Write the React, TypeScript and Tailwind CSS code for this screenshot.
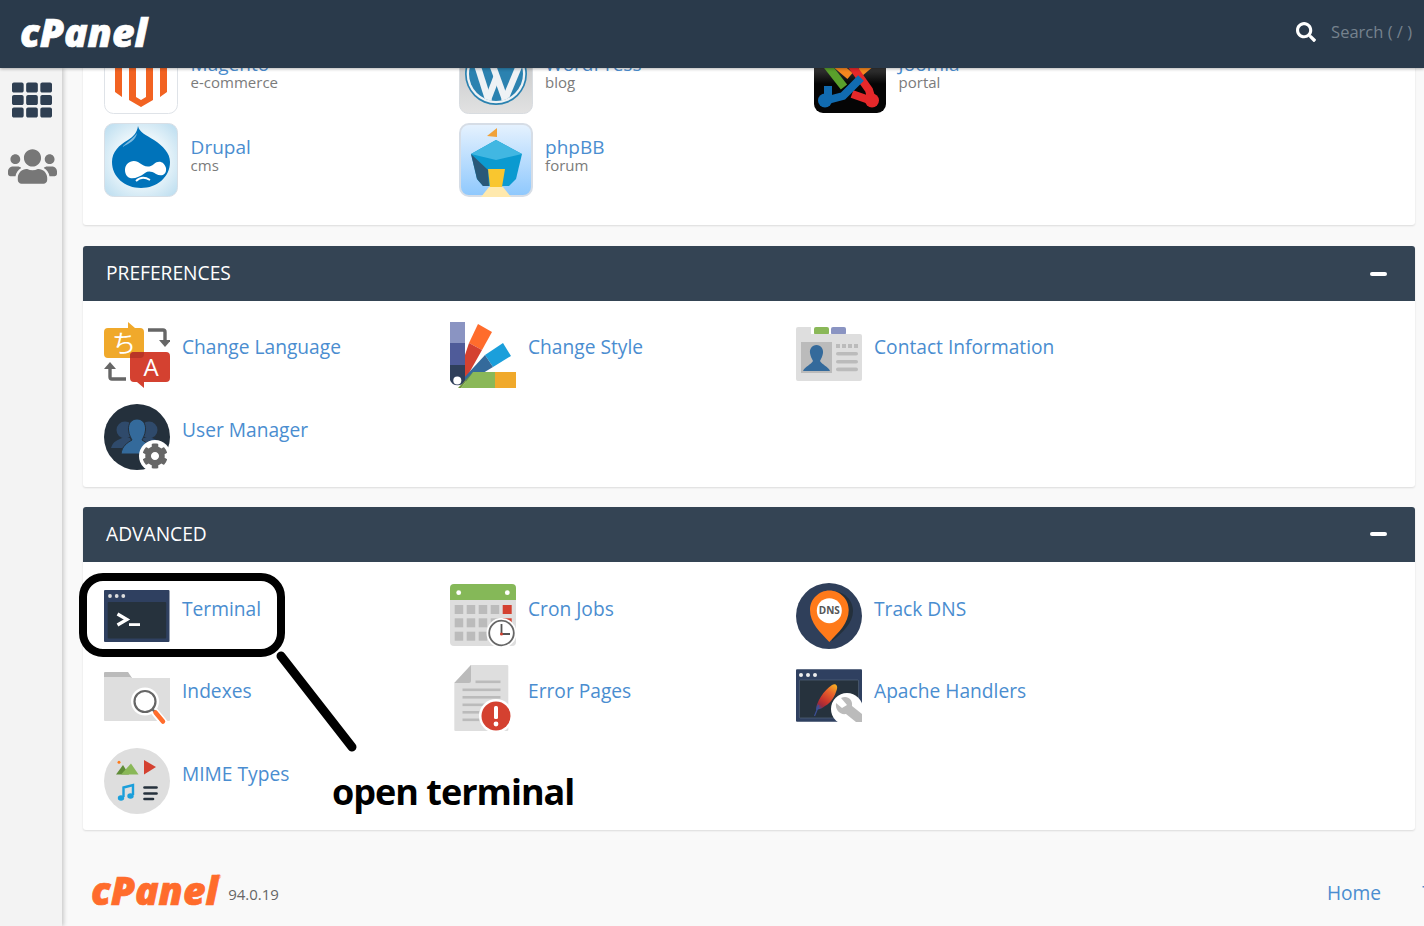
import type { ReactNode } from "react";
import { FaCog, FaSearch, FaTh, FaUsers } from "react-icons/fa";

const Icon = ({ children, box = 66, high }: { children: ReactNode; box?: number; high?: number }) => (
	<svg width={box} height={high ?? box} viewBox={`0 0 ${box} ${high ?? box}`} className="block shrink-0">
		{children}
	</svg>
);

const Magento = () => (
	<Icon box={74}>
		<rect x="0.5" y="0.5" width="73" height="73" rx="9" fill="#fff" stroke="#dfe3e8" />
		<path
			fill="#f26322"
			d="M37 6 63 21V52L56 57V25L49 21V60L37 67 25 60V21L18 25V57L11 52V21ZM32 25V57L37 60 42 57V25L37 21Z"
		/>
	</Icon>
);

const WordPress = () => (
	<Icon box={74}>
		<defs>
			<linearGradient id="wp" x1="0" y1="0" x2="0" y2="1">
				<stop offset="0" stopColor="#bfc1c3" />
				<stop offset="1" stopColor="#e2e2e2" />
			</linearGradient>
			<clipPath id="wpc">
				<circle cx="37" cy="34" r="27" />
			</clipPath>
		</defs>
		<rect x="0.5" y="0.5" width="73" height="73" rx="9" fill="url(#wp)" stroke="#d8dce0" />
		<circle cx="37" cy="34" r="31" fill="#2b82b0" />
		<circle cx="37" cy="34" r="29.3" fill="#eef2f5" />
		<circle cx="37" cy="34" r="27" fill="#2b82b0" />
		<g clipPath="url(#wpc)" fill="none" stroke="#eef2f5" strokeWidth="6.5">
			<path d="M16 18 30 62" />
			<path d="M28 62 38 36" />
			<path d="M31 18 47 62" />
			<path d="M45 62 60 26" />
		</g>
	</Icon>
);

const Joomla = () => (
	<Icon box={72} high={74}>
		<defs>
			<linearGradient id="jo" x1="0" y1="0" x2="0" y2="1">
				<stop offset="0.4" stopColor="#333" />
				<stop offset="0.6" stopColor="#050505" />
			</linearGradient>
		</defs>
		<rect width="72" height="73" rx="9" fill="url(#jo)" />
		<g fill="none" strokeWidth="8">
			<path stroke="#f5871f" d="M22 24 36 36M56 24 42 36" />
			<path stroke="#e5282a" d="M38 26 55 50 58 60M38 54 58 61" />
			<path stroke="#5aa02c" d="M12 24 30 47" />
			<path stroke="#116bb0" d="M47 38 29 56 14 60M14 46V60" />
		</g>
		<circle cx="11" cy="60.5" r="7" fill="#116bb0" />
		<circle cx="58" cy="60.5" r="7" fill="#e5282a" />
	</Icon>
);

const Drupal = () => (
	<Icon box={74}>
		<defs>
			<radialGradient id="dr" cx="0.5" cy="0.5" r="0.7">
				<stop offset="0.45" stopColor="#eef7fb" />
				<stop offset="1" stopColor="#b9dcef" />
			</radialGradient>
		</defs>
		<rect x="0.5" y="0.5" width="73" height="73" rx="9" fill="url(#dr)" stroke="#d8dfe6" />
		<path
			fill="#0073ba"
			d="M34 3C35 9 42 12 50 17 59 23 66 30 66 39 66 54 53 65 37 65 21 65 8 54 8 39 8 29 15 22 24 17 29 14 33 10 34 3Z"
		/>
		<path fill="#7cb9de" d="M33 10C30 15 23 19 18 24 25 21 32 17 33 10Z" />
		<path
			fill="#fff"
			d="M21 47C21 40 28 36 34 39 40 43 44 46 50 41 54 37 60 38 62 45 63 52 57 54 52 51 47 48 44 48 41 50 36 54 30 56 26 55 23 54 21 51 21 47Z"
		/>
		<path fill="none" stroke="#fff" strokeWidth="1.8" d="M32 58C36 54 41 54 46 57" />
	</Icon>
);

const PhpBB = () => (
	<Icon box={74}>
		<defs>
			<linearGradient id="bb" x1="0" y1="0" x2="0" y2="1">
				<stop offset="0" stopColor="#e6f2fe" />
				<stop offset="1" stopColor="#8ec8fd" />
			</linearGradient>
		</defs>
		<rect x="1" y="1" width="72" height="72" rx="9" fill="url(#bb)" stroke="#d6dde6" strokeWidth="2" />
		<path fill="#f0a23a" d="M28 13 38 5V14Z" />
		<path fill="#0b9ad0" d="M37 17 63 31 57 56 50 63H24L18 56 12 31Z" />
		<path fill="#41b7e2" d="M37 17 63 31 37 37 12 31Z" />
		<path fill="#2a5878" d="M12 31 29 47 30 63H24L18 56Z" />
		<path fill="#ffe9ad" d="M30 64H44L52 74H22Z" />
		<path fill="#f9c62f" d="M29 46H46L43 64H31Z" />
	</Icon>
);

const Language = () => (
	<Icon>
		<path fill="#f0a92b" d="M24 0 31 6H36Q40 6 40 10V32Q40 36 36 36H4Q0 36 0 32V10Q0 6 4 6H24Z" />
		<path fill="#d44130" d="M30 30H62Q66 30 66 34V56Q66 60 62 60H40V66L33 60H30Q26 60 26 56V34Q26 30 30 30Z" />
		<path fill="#b93527" d="M26 36H36Q40 36 40 32V30H30Q26 30 26 34Z" />
		<text x="20" y="30" textAnchor="middle" fontSize="24" fill="#fff" fontFamily="'Noto Sans CJK JP', sans-serif">ち</text>
		<text x="47" y="54" textAnchor="middle" fontSize="24" fill="#fff" fontFamily="'Open Sans', sans-serif">A</text>
		<path fill="none" stroke="#666" strokeWidth="3.4" d="M44 8H59Q61 8 61 10V18" />
		<path fill="#666" d="M55 18H67L61 25Z" />
		<path fill="none" stroke="#666" strokeWidth="3.4" d="M22 57H8Q6 57 6 55V46" />
		<path fill="#666" d="M0 47H12L6 40Z" />
	</Icon>
);

const UserManager = () => (
	<Icon>
		<circle cx="33" cy="33" r="33" fill="#24303c" />
		<g fill="#2f4a6b">
			<circle cx="21" cy="26" r="8.5" />
			<path d="M7 44C9 37 14 36 18 34H26L30 44Z" />
			<circle cx="45" cy="26" r="8.5" />
			<path d="M38 34H48C53 36 56 38 58 44H38Z" />
		</g>
		<path fill="#346a9b" stroke="#24303c" d="M33 15C39 15 42 20 41.5 26 41 31 39 34 38 36 43 39 48 42 49 50H17C18 42 23 39 28 36 27 34 25 31 24.5 26 24 20 27 15 33 15Z" />
		<circle cx="51" cy="52" r="16" fill="#fff" />
		<FaCog x="38" y="39" size={26} color="#666" />
	</Icon>
);

const Style = () => (
	<Icon>
		<path fill="#ff6c2c" d="M28 2 42 10 32 28 19 21Z" />
		<path fill="#d44130" d="M19 21 32 28 14 60V36Z" />
		<path fill="#1b9fdb" d="M53 21 61 34 43 45 35 33Z" />
		<path fill="#346a9b" d="M35 33 43 45 18 60 12 58Z" />
		<path fill="#8ab858" d="M23 50H45V66H11Z" />
		<path fill="#6d9438" d="M23 50 11 66H8Z" />
		<rect x="45" y="50" width="21" height="16" fill="#f0a92b" />
		<rect width="15" height="21" fill="#8a94c2" />
		<rect y="21" width="15" height="22" fill="#4f5b99" />
		<path fill="#2f3f5a" d="M0 43H15V58A8 8 0 0 1 0 58Z" />
		<circle cx="7.3" cy="58.5" r="4" fill="#fff" />
	</Icon>
);

const Contact = () => (
	<Icon>
		<rect x="18" y="5" width="15" height="8" rx="2" fill="#8ab858" />
		<rect x="35" y="5" width="15" height="8" rx="2" fill="#8a94c2" />
		<path fill="#dedede" d="M2 5H15L15 12H64Q66 12 66 14V57Q66 59 64 59H2Q0 59 0 57V7Q0 5 2 5Z" />
		<rect x="5" y="20" width="31" height="31" fill="#bbb" />
		<path fill="#346a9b" d="M20.5 23C25 23 27.5 27 27 31 26.6 34 25 37 24 39 26 43 32 44 34 49H7C9 44 15 43 17 39 16 37 14.4 34 14 31 13.5 27 16 23 20.5 23Z" />
		<g fill="#bbb">
			<rect x="40" y="22" width="4" height="4" />
			<rect x="46" y="22" width="4" height="4" />
			<rect x="52" y="22" width="4" height="4" />
			<rect x="58" y="22" width="4" height="4" />
			<rect x="40" y="30" width="22" height="3.6" rx="1.8" />
			<rect x="40" y="38" width="22" height="3.6" rx="1.8" />
			<rect x="40" y="45.6" width="22" height="3.6" rx="1.8" />
		</g>
	</Icon>
);

const Terminal = () => (
	<Icon>
		<rect y="7" width="65.5" height="52" rx="1" fill="#2f4060" />
		<rect x="3.7" y="19" width="58.5" height="36.5" rx="1" fill="#26323d" />
		<g fill="#ddd">
			<circle cx="6" cy="13" r="1.9" />
			<circle cx="12.7" cy="13" r="1.9" />
			<circle cx="19.3" cy="13" r="1.9" />
		</g>
		<path fill="none" stroke="#fff" strokeWidth="3.2" d="M13.5 31 23 36.5 13.5 42" />
		<rect x="25" y="40.2" width="11" height="2.8" fill="#fff" />
	</Icon>
);

const Cron = () => (
	<Icon>
		<path fill="#dedede" d="M0 17H66V59Q66 63 62 63H4Q0 63 0 59Z" />
		<path fill="#85b858" d="M4 1H62Q66 1 66 5V17H0V5Q0 1 4 1Z" />
		<circle cx="8.7" cy="9.7" r="2.4" fill="#fff" />
		<circle cx="57.3" cy="9.7" r="2.4" fill="#fff" />
		<g fill="#bbb">
			{[4.7, 16.7, 28.7, 40.7].map((x) =>
				[22, 35.3, 48.7].map((y) => <rect key={`${x}-${y}`} x={x} y={y} width="8.5" height="9" />),
			)}
		</g>
		<rect x="52.7" y="22" width="9" height="9" fill="#d44130" />
		<rect x="52.7" y="35.3" width="9" height="9" fill="#d44130" />
		<circle cx="51.5" cy="50" r="15" fill="#fff" />
		<circle cx="51.5" cy="50" r="12.3" fill="#fff" stroke="#666" strokeWidth="1.8" />
		<path fill="none" stroke="#555" strokeWidth="1.8" d="M51.5 41V51H60" />
		<circle cx="51.5" cy="51" r="1.5" fill="#d44130" />
	</Icon>
);

const Dns = () => (
	<Icon>
		<circle cx="33" cy="33" r="33" fill="#2f3f5a" />
		<path fill="#24303c" d="M36 8C48 8 57 17 57 28 57 40 46 50 36 58Z" />
		<path fill="#ff7a1a" d="M33.3 59C24 49 14 40 14 27 14 16 23 7.5 33.3 7.5 44 7.5 52.7 16 52.7 27 52.7 40 43 49 33.3 59Z" />
		<circle cx="33.3" cy="27.7" r="12.5" fill="#fff" />
		<text x="33.3" y="31.2" textAnchor="middle" fontSize="10" fontWeight="700" fill="#555" fontFamily="'Open Sans', sans-serif">DNS</text>
	</Icon>
);

const Indexes = () => (
	<Icon>
		<path fill="#bbb" d="M1 7H24L28 13H0V8Q0 7 1 7Z" />
		<path fill="#dedede" d="M0 12H26L28 13H66V55Q66 56 65 56H1Q0 56 0 55Z" />
		<circle cx="41" cy="36.5" r="14" fill="#fff" />
		<path stroke="#fff" strokeWidth="8" strokeLinecap="round" d="M50 46 60 58" />
		<circle cx="41" cy="36.5" r="10.5" fill="#fff" stroke="#666" strokeWidth="2.2" />
		<path stroke="#666" strokeWidth="2.4" d="M48 44 51 47" />
		<path stroke="#ff6c2c" strokeWidth="4.5" strokeLinecap="round" d="M51.5 47.5 59 56.5" />
	</Icon>
);

const ErrorPages = () => (
	<Icon>
		<path fill="#dedede" d="M21 0H57Q58.3 0 58.3 1V65Q58.3 66 57 66H5.5Q4.3 66 4.3 65V18Z" />
		<path fill="#bbb" d="M4.3 18 21 0V16Q21 18 19 18Z" />
		<g fill="#bbb">
			<rect x="25.5" y="15.5" width="25" height="2.6" />
			<rect x="12.5" y="23.5" width="38" height="2.6" />
			<rect x="12.5" y="31" width="38" height="2.6" />
			<rect x="12.5" y="38.5" width="24" height="2.6" />
			<rect x="12.5" y="46" width="17" height="2.6" />
			<rect x="12.5" y="53.5" width="17" height="2.6" />
		</g>
		<circle cx="46" cy="51" r="17" fill="#fff" />
		<circle cx="46" cy="51" r="14.5" fill="#d44130" />
		<rect x="44" y="41" width="4" height="13" rx="1.5" fill="#fff" />
		<circle cx="46" cy="59" r="2.4" fill="#fff" />
	</Icon>
);

const Apache = () => (
	<Icon>
		<defs>
			<linearGradient id="fe" x1="0.8" y1="0" x2="0.2" y2="1">
				<stop offset="0" stopColor="#f5a623" />
				<stop offset="0.3" stopColor="#e8622c" />
				<stop offset="0.65" stopColor="#c8342c" />
				<stop offset="0.85" stopColor="#9c2a3c" />
				<stop offset="1" stopColor="#3d4f96" />
			</linearGradient>
		</defs>
		<rect y="4.3" width="66" height="52.5" rx="1" fill="#2f4060" />
		<rect x="3.4" y="15" width="59.2" height="38" rx="1" fill="#26323d" stroke="#54667c" strokeWidth="0.7" />
		<g fill="#eee">
			<circle cx="5" cy="10" r="2" />
			<circle cx="12" cy="10" r="2" />
			<circle cx="19" cy="10" r="2" />
		</g>
		<path fill="url(#fe)" d="M36 20C39 18 42 20 41 24 39 31 35 38 29 41 27 43 24 44 20 45 20 37 28 25 36 20Z" />
		<path fill="none" stroke="#3d4f96" strokeWidth="1.2" d="M18.5 51 23 40" />
		<circle cx="51" cy="44" r="16" fill="#fff" />
		<path fill="#bbb" d="M45 33C51 30 57 34 56 41L66 49V57H60L50 49C44 50 39 45 40 38L46 43 51 40Z" />
		<rect y="57" width="66" height="9" fill="#fff" />
	</Icon>
);

const Mime = () => (
	<Icon>
		<circle cx="33" cy="33" r="33" fill="#dedede" />
		<circle cx="15" cy="14.3" r="1.5" fill="#ff7a1a" />
		<path fill="#5f8c37" d="M12 26.5 19 17 25 26.5Z" />
		<path fill="#8ab858" d="M17 26.5 27 15.5 34.5 26.5Z" />
		<path fill="#d44130" d="M40 12 52 19 40 26.5Z" />
		<path fill="none" stroke="#1b9fdb" strokeWidth="2.4" d="M19.5 49V39.5L29 37V47" />
		<ellipse cx="17" cy="50" rx="3.2" ry="2.8" fill="#1b9fdb" />
		<ellipse cx="26.5" cy="48" rx="3.2" ry="2.8" fill="#1b9fdb" />
		<g stroke="#26323d" strokeWidth="2.6" strokeLinecap="round">
			<path d="M40.5 39.5H52.5" />
			<path d="M40.5 45.5H52.5" />
			<path d="M40.5 51H49" />
		</g>
	</Icon>
);

const Logo = ({ className }: { className: string }) => (
	<span className={`font-['Open_Sans',sans-serif] italic font-extrabold text-[39px] leading-none [-webkit-text-stroke:0.7px_currentColor] ${className}`}>
		cPanel
	</span>
);

const App1 = ({ icon, name, sub }: { icon: ReactNode; name?: string; sub?: string }) => (
	<div className="flex gap-[12.6px]">
		{icon}
		<div className="pt-[14.4px]">
			<div className="text-[19px] leading-[21px] text-[#4a8dd0]">{name}</div>
			<div className="text-[15px] leading-[15px] text-[#7b7b7b]">{sub}</div>
		</div>
	</div>
);

const Item = ({ icon, name }: { icon: ReactNode; name: string }) => (
	<div className="flex gap-3 h-[66px]">
		{icon}
		<div className="text-[19.2px] leading-[26px] text-[#4a8dd0] whitespace-nowrap pt-[12.4px] [.low_&]:pt-[12.8px]">{name}</div>
	</div>
);

const Panel = ({ title, className, children }: { title: string; className: string; children: ReactNode }) => (
	<section className="bg-white rounded-[3px] shadow-[0_1px_2px_rgba(0,0,0,0.12)] overflow-hidden">
		<div className="h-[55px] bg-[#344454] flex items-center justify-between pl-[23px] pr-[28px]">
			<h2 className="text-[19.2px] text-white">{title}</h2>
			<div className="w-[17px] h-1 rounded-sm bg-white" />
		</div>
		<div className={`grid grid-cols-[346px_346px_auto] pl-[21px] pt-[21px] ${className}`}>{children}</div>
	</section>
);

export default function App() {
	return (
		<div className="relative w-screen h-screen overflow-hidden flex flex-col bg-[#f9f9f9] font-['Open_Sans',sans-serif]">
			<header className="relative z-20 h-[68px] shrink-0 bg-[#2a3a4b] flex items-center justify-between pl-[20px] pr-3 shadow-[0_1px_3px_rgba(0,0,0,0.3)]">
				<Logo className="text-white -mt-[6px]" />
				<div className="flex items-center gap-[15px] pb-1">
					<FaSearch className="text-white text-[20px]" />
					<span className="text-[16.5px] text-[#76828e]">Search ( / )</span>
				</div>
			</header>
			<div className="flex flex-1 min-h-0">
				<aside className="relative z-10 w-[62px] shrink-0 bg-[#f3f3f3] shadow-[2px_0_4px_rgba(0,0,0,0.18)] flex flex-col items-center pl-[2px] pt-[12px] gap-[22px]">
					<FaTh className="text-[#2f3f52] text-[40px]" />
					<FaUsers className="text-[#777] text-[49px]" />
				</aside>
				<main className="flex-1 min-w-0 overflow-hidden pl-[21px] pr-[9px]">
					<section className="-mt-[28px] bg-white rounded-[3px] shadow-[0_1px_2px_rgba(0,0,0,0.12)] pl-[21px] pb-[28px] grid grid-cols-[354.5px_355.5px_auto] gap-y-[9px]">
						<App1 icon={<Magento />} name="Magento" sub="e-commerce" />
						<App1 icon={<WordPress />} name="WordPress" sub="blog" />
						<App1 icon={<Joomla />} name="Joomla" sub="portal" />
						<App1 icon={<Drupal />} name="Drupal" sub="cms" />
						<App1 icon={<PhpBB />} name="phpBB" sub="forum" />
					</section>
					<div className="mt-[21px] flex flex-col gap-5">
						<Panel title="PREFERENCES" className="gap-y-[16.2px] pb-[16.8px]">
							<Item icon={<Language />} name="Change Language" />
							<Item icon={<Style />} name="Change Style" />
							<Item icon={<Contact />} name="Contact Information" />
							<Item icon={<UserManager />} name="User Manager" />
						</Panel>
						<Panel title="ADVANCED" className="low gap-y-[16.4px] pb-[16.2px]">
							<Item icon={<Terminal />} name="Terminal" />
							<Item icon={<Cron />} name="Cron Jobs" />
							<Item icon={<Dns />} name="Track DNS" />
							<Item icon={<Indexes />} name="Indexes" />
							<Item icon={<ErrorPages />} name="Error Pages" />
							<Item icon={<Apache />} name="Apache Handlers" />
							<Item icon={<Mime />} name="MIME Types" />
						</Panel>
					</div>
					<footer className="flex items-center pl-2 pt-[40px] w-[1400px]">
						<div className="relative">
							<Logo className="block text-[#ff6c2c]" />
							<span className="absolute -right-[3px] top-[3px] text-[6px] text-[#ff6c2c]">®</span>
						</div>
						<span className="ml-[10px] mt-[10px] text-[15px] text-[#666]">94.0.19</span>
						<a className="ml-[1048px] mt-[8px] text-[19.2px] text-[#4a8dd0]">Home</a>
						<a className="ml-[41px] mt-[8px] text-[19.2px] text-[#4a8dd0] whitespace-nowrap">Trademarks</a>
					</footer>
				</main>
			</div>

			{/* hand drawn note over the screenshot */}
			<div className="absolute z-30 left-[79px] top-[573px] w-[206px] h-[84px] border-[8px] border-black rounded-[24px]" />
			<svg className="absolute z-30 left-[270px] top-[645px]" width="95" height="115" viewBox="0 0 95 115">
				<path d="M11 11 82 102" stroke="#000" strokeWidth="9" strokeLinecap="round" />
			</svg>
			<div className="absolute z-30 left-[332px] top-[768px] text-[36px] leading-[48px] font-bold tracking-[-1px] text-black whitespace-nowrap">
				open terminal
			</div>
		</div>
	);
}
